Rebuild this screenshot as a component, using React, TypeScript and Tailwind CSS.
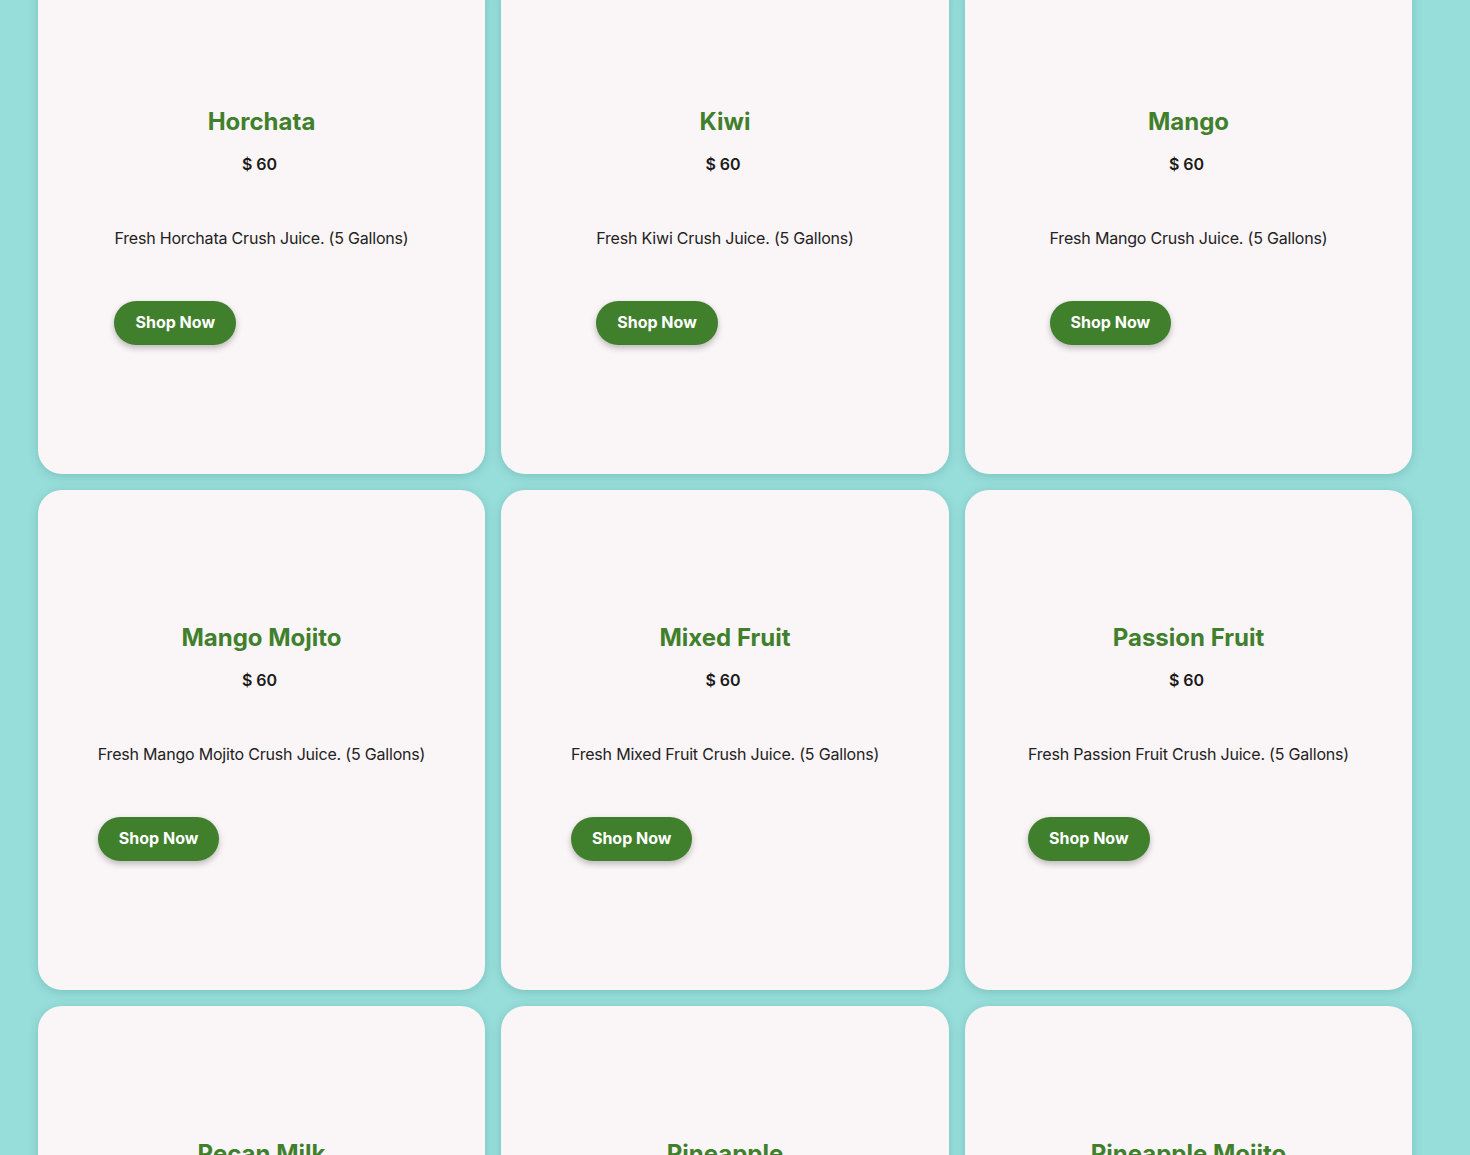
import React from "react";

interface Product {
  name: string;
  price: number;
}

const PRODUCTS: Product[] = [
  { name: "Horchata", price: 60 },
  { name: "Kiwi", price: 60 },
  { name: "Mango", price: 60 },
  { name: "Mango Mojito", price: 60 },
  { name: "Mixed Fruit", price: 60 },
  { name: "Passion Fruit", price: 60 },
  { name: "Pecan Milk", price: 60 },
  { name: "Pineapple", price: 60 },
  { name: "Pineapple Mojito", price: 60 },
];

const ProductCard: React.FC<{ product: Product }> = ({ product }) => {
  return (
    <div className="h-[500px] rounded-[24px] bg-[#faf5f6] shadow-[0_2px_10px_rgba(40,110,105,0.25)] flex flex-col items-center pt-[132px]">
      <h2 className="text-[24px] leading-[32px] font-bold text-[#40802c]">
        {product.name}
      </h2>
      <div className="mt-[14px] text-[16px] leading-[24px] font-semibold text-[#1a1a1a] pr-1">
        $ {product.price}
      </div>
      {/* description + button share the same left edge */}
      <div className="mt-[50px] flex flex-col items-start">
        <p className="text-[16px] leading-[24px] text-[#222] tracking-[-0.2px]">
          Fresh {product.name} Crush Juice. (5 Gallons)
        </p>
        <button className="mt-[51px] h-[44px] px-[21px] pb-[2px] rounded-full bg-[#40802c] text-white text-[16px] font-bold shadow-[0_3px_6px_rgba(0,0,0,0.25)]">
          Shop Now
        </button>
      </div>
    </div>
  );
};

export default function App() {
  return (
    <div
      className="min-h-screen bg-[#97dedb] overflow-hidden"
      style={{ fontFamily: "Inter, 'Noto Sans', sans-serif" }}
    >
      <div className="-mt-[26px] pl-[38px] pb-10">
        <div className="grid grid-cols-[447px_448px_447px] gap-x-[16px] gap-y-[16px]">
          {PRODUCTS.map((p) => (
            <ProductCard key={p.name} product={p} />
          ))}
        </div>
      </div>
    </div>
  );
}
